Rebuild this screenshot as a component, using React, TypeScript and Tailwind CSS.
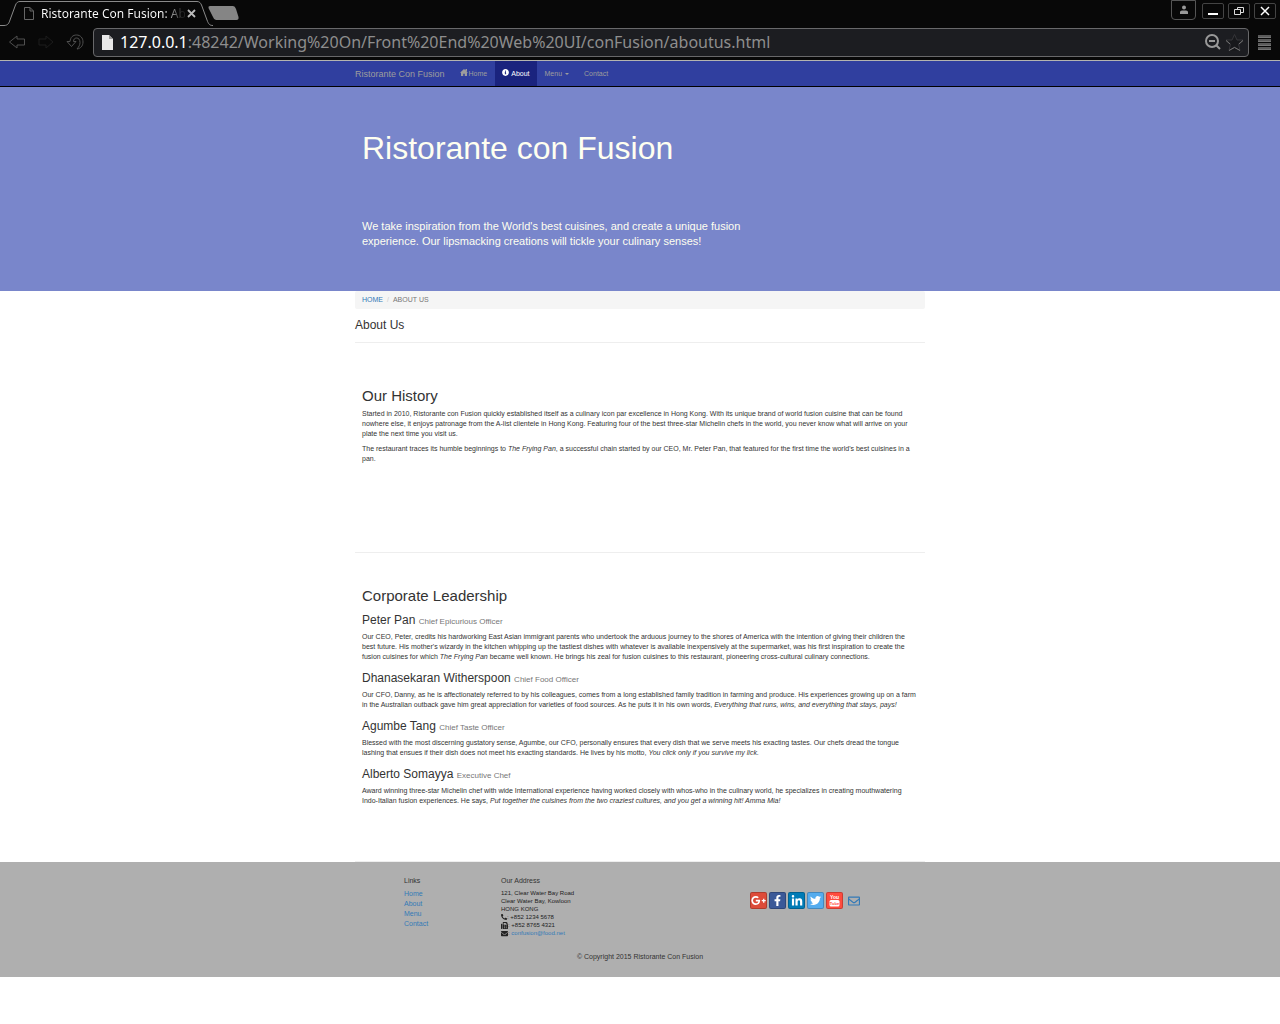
import React from 'react';
import {
  FaEnvelope,
  FaFacebookF,
  FaFax,
  FaGooglePlusG,
  FaInfoCircle,
  FaLinkedinIn,
  FaPhoneAlt,
  FaRegEnvelope,
  FaTwitter,
} from 'react-icons/fa';

const link = 'text-[#337ab7] hover:underline';

function BrowserChrome() {
  return (
    <header className="border-b border-[#b4b4b0] bg-[#080808] font-['Noto_Sans',sans-serif]">
      <div className="flex h-[26px] items-start">
        <div className="relative flex h-[26px] w-[213px] items-center pl-[23px]">
          <svg className="absolute inset-0" width="213" height="26" fill="none" stroke="#8a8a8a">
            <path d="M0 25.5H4C8 25.500 9 23 10 20L15.500 5C16.500 2.500 18 1.500 20 1.500H197C199.500 1.500 200.500 3 201.500 5L207 20C208.500 24 209.500 25.500 213 25.500" />
          </svg>
          <svg width="12" height="15" viewBox="0 0 12 15" fill="none" stroke="#666">
            <path d="M1.500 1.500H7L10.500 5V13.500H1.500ZM7 1.500V5H10.500" />
          </svg>
          <span className="relative ml-[6px] w-[144px] bg-[linear-gradient(90deg,#fff_85%,#222_98%)] bg-clip-text text-[12px] leading-[17px] whitespace-nowrap text-transparent">
            Ristorante Con Fusion: Ab
          </span>
          <button aria-label="Close tab" className="relative ml-[2px]">
            <svg width="9" height="9" stroke="#bbb" strokeWidth="1.800">
              <path d="M1 1L8 8M8 1L1 8" />
            </svg>
          </button>
        </div>
        <button aria-label="New tab" className="-ml-[5px] pt-[6px]">
          <svg width="31" height="14">
            <path d="M2 0H25Q27 0 28 3L30.500 11Q31 14 28.500 14H8Q6 14 5 11L0.500 2Q0 0 2 0Z" fill="#858585" />
          </svg>
        </button>
        <div className="ml-auto flex items-start gap-[4px] pr-[4px]">
          <button aria-label="Profile" className="mr-[2px] flex h-[20px] w-[25px] items-center justify-center rounded-b-[4px] border border-[#555]">
            <svg width="10" height="10" fill="#999">
              <circle cx="5" cy="2.500" r="2" />
              <path d="M1 9V7Q1 5.500 3 5.500H7Q9 5.500 9 7V9Z" />
            </svg>
          </button>
          <button aria-label="Minimize" className="mt-[3px] flex h-4 w-[22px] items-center justify-center rounded-[2px] border border-[#444]">
            <svg width="12" height="12"><path d="M1 8H11V10H1Z" fill="#fff" /></svg>
          </button>
          <button aria-label="Restore" className="mt-[3px] flex h-4 w-[22px] items-center justify-center rounded-[2px] border border-[#444]">
            <svg width="12" height="10" fill="none" stroke="#ddd">
              <path d="M4.500 3V1.500H10.500V6.500H8M1.500 3.500H7.500V8.500H1.500Z" />
            </svg>
          </button>
          <button aria-label="Close" className="mt-[3px] flex h-4 w-[22px] items-center justify-center rounded-[2px] border border-[#444]">
            <svg width="10" height="10" stroke="#fff" strokeWidth="1.500"><path d="M1 1L9 9M9 1L1 9" /></svg>
          </button>
        </div>
      </div>
      <div className="flex h-[34px] items-center pb-[2px] pl-[8px]">
        <button aria-label="Back">
          <svg width="18" height="16" fill="none" stroke="#505050">
            <path d="M1.500 8L9 2V5H16.500V11H9V14Z" />
          </svg>
        </button>
        <button aria-label="Forward" className="ml-[12px]">
          <svg width="16" height="16" fill="none" stroke="#1c1c1c">
            <path d="M15 8L8 2V5H1V11H8V14Z" />
          </svg>
        </button>
        <button aria-label="Reload" className="ml-[12px]">
          <svg width="20" height="18" fill="none" stroke="#505050">
            <path d="M1 8.500H4C4.500 4 7 2 10.500 2C14.500 2 17 5 17 9C17 13 14.500 15.500 11 16C13 13.500 14 12 14 9.500C14 6.500 12.500 5 10.500 5C8.500 5 7.500 6.500 7.500 8.500H10L5.500 13.500Z" />
          </svg>
        </button>
        <div className="ml-[7px] flex h-[29px] flex-1 items-center rounded-[4px] border border-[#68686a] bg-[#1c1d21] pr-[4px] pl-[8px]">
          <svg width="12" height="15">
            <path d="M0 0H7L11 4V15H0Z" fill="#e8e8e8" />
            <path d="M7 0V4H11Z" fill="#999" />
          </svg>
          <div className="ml-[6px] flex-1 text-[16px] leading-6 text-[#8e8e8e]">
            <span className="text-white">127.0.0.1</span>:48242/Working%20On/Front%20End%20Web%20UI/conFusion/aboutus.html
          </div>
          <button aria-label="Zoom">
            <svg width="18" height="18" fill="none" stroke="#999" strokeWidth="2">
              <circle cx="8" cy="8" r="6" />
              <path d="M5 8H11M12 12L16 16" />
            </svg>
          </button>
          <button aria-label="Bookmark" className="ml-[3px]">
            <svg width="19" height="19" fill="#17181b" stroke="#36363a">
              <path d="M9.500 1.500L12 7H18L13.500 11L15 17.500L9.500 14L4 17.500L5.500 11L1 7H7Z" />
              <path d="M1 7.500L5 11M18 7.500L14 11M4 17.500L9.500 14.500L15 17.500" stroke="#777" />
            </svg>
          </button>
        </div>
        <button aria-label="Menu" className="mr-[8px] ml-[8px]">
          <svg width="15" height="15">
            <path d="M1 0H14V3H1ZM1 4H14V7H1ZM1 8H14V11H1ZM1 12H14V15H1Z" fill="#5a5a5a" />
            <path d="M1 2.500H14M1 6.500H14M1 10.500H14M1 14.500H14" stroke="#757575" />
          </svg>
        </button>
      </div>
    </header>
  );
}

function Nav() {
  return (
    <nav className="border-b border-black bg-[#303f9f] text-[7px] leading-[10px] text-[#9d9d9d]">
      <div className="mx-auto flex h-[25px] max-w-[570px] items-stretch">
        <a href="#" className="mr-[7px] flex items-center text-[9px]">Ristorante Con Fusion</a>
        <a href="#" className="flex items-center gap-[1px] px-[8px]">
          <svg width="8" height="7" viewBox="0 0 16 14" fill="currentColor" className="mb-[2px]">
            <path d="M8 0L16 7.500H14V14H9.500V9.500H6.500V14H2V7.500H0L8 0ZM11 0H14V5L11 3Z" />
          </svg>
          Home
        </a>
        <a href="#" className="flex items-center gap-[2px] bg-[#1a237e] px-[7px] text-white">
          <FaInfoCircle size={7} className="mb-[2px]" /> About
        </a>
        <button className="flex items-center gap-[3px] px-[8px]">
          Menu
          <svg width="4" height="2" fill="currentColor"><path d="M0 0H4L2 2Z" /></svg>
        </button>
        <a href="#" className="flex items-center px-[7px]">Contact</a>
      </div>
    </nav>
  );
}

const leaders = [
  {
    name: 'Peter Pan',
    role: 'Chief Epicurious Officer',
    bio: (
      <>
        Our CEO, Peter, credits his hardworking East Asian immigrant parents who undertook the arduous journey to the
        shores of America with the intention of giving their children the best future. His mother's wizardy in the
        kitchen whipping up the tastiest dishes with whatever is available inexpensively at the supermarket, was his
        first inspiration to create the fusion cuisines for which <em>The Frying Pan</em> became well known. He brings
        his zeal for fusion cuisines to this restaurant, pioneering cross-cultural culinary connections.
      </>
    ),
  },
  {
    name: 'Dhanasekaran Witherspoon',
    role: 'Chief Food Officer',
    bio: (
      <>
        Our CFO, Danny, as he is affectionately referred to by his colleagues, comes from a long established family
        tradition in farming and produce. His experiences growing up on a farm in the Australian outback gave him great
        appreciation for varieties of food sources. As he puts it in his own words,{' '}
        <em>Everything that runs, wins, and everything that stays, pays!</em>
      </>
    ),
  },
  {
    name: 'Agumbe Tang',
    role: 'Chief Taste Officer',
    bio: (
      <>
        Blessed with the most discerning gustatory sense, Agumbe, our CFO, personally ensures that every dish that we
        serve meets his exacting tastes. Our chefs dread the tongue lashing that ensues if their dish does not meet his
        exacting standards. He lives by his motto, <em>You click only if you survive my lick.</em>
      </>
    ),
  },
  {
    name: 'Alberto Somayya',
    role: 'Executive Chef',
    bio: (
      <>
        Award winning three-star Michelin chef with wide International experience having worked closely with whos-who in
        the culinary world, he specializes in creating mouthwatering Indo-Italian fusion experiences. He says,{' '}
        <em>Put together the cuisines from the two craziest cultures, and you get a winning hit! Amma Mia!</em>
      </>
    ),
  },
];

function Footer() {
  const tile = 'flex size-[17px] items-center justify-center rounded-[2px] border border-black/20 text-white';
  return (
    <footer className="bg-[#afafaf] pt-[14px] pb-[15px]">
      <div className="mx-auto flex max-w-[570px] pl-[49px]">
        <div className="w-[97px]">
          <h5 className="mb-[3px]">Links</h5>
          <ul>
            {['Home', 'About', 'Menu', 'Contact'].map((item) => (
              <li key={item}><a href="#" className={link}>{item}</a></li>
            ))}
          </ul>
        </div>
        <div className="w-[244px]">
          <h5 className="mb-[3px]">Our Address</h5>
          <address className="text-[6px] leading-[8px] text-[#222] not-italic">
            121, Clear Water Bay Road<br />
            Clear Water Bay, Kowloon<br />
            HONG KONG
            <div className="flex items-center"><FaPhoneAlt size={6} />: +852 1234 5678</div>
            <div className="flex items-center"><FaFax size={7} />: +852 8765 4321</div>
            <div className="flex items-center"><FaEnvelope size={7} />:&nbsp;<a href="mailto:confusion@food.net" className={link}>confusion@food.net</a></div>
          </address>
        </div>
        <div className="flex gap-[2px] pt-[16px] pl-[5px]">
          <a href="#" aria-label="Google Plus" className={`${tile} bg-[#dd4b39]`}><FaGooglePlusG size={15} /></a>
          <a href="#" aria-label="Facebook" className={`${tile} bg-[#3b5998]`}><FaFacebookF size={11} /></a>
          <a href="#" aria-label="LinkedIn" className={`${tile} bg-[#007bb6]`}><FaLinkedinIn size={12} /></a>
          <a href="#" aria-label="Twitter" className={`${tile} bg-[#55acee]`}><FaTwitter size={11} /></a>
          <a href="#" aria-label="YouTube" className={`${tile} bg-[#ff4b3e]`}>
            <svg width="11" height="13" viewBox="0 0 22 26" fontWeight="bold" textAnchor="middle">
              <text x="11" y="10" fontSize="10" fill="#fff">You</text>
              <rect x="1" y="12" width="20" height="13" rx="3" fill="#fff" />
              <text x="11" y="22" fontSize="8" fill="#ff4b3e">Tube</text>
            </svg>
          </a>
          <a href="#" aria-label="Email" className="flex size-[17px] items-center justify-center text-[#337ab7]"><FaRegEnvelope size={12} /></a>
        </div>
      </div>
      <p className="mt-[15px] text-center">© Copyright 2015 Ristorante Con Fusion</p>
    </footer>
  );
}

export default function App() {
  return (
    <div className="min-h-screen bg-white font-['Liberation_Sans',Arial,sans-serif] text-[7px] leading-[10px] text-[#333]">
      <BrowserChrome />
      <Nav />
      <section className="bg-[#7986cb] text-[#fffff0]">
        <div className="mx-auto max-w-[570px] px-[7px] pt-[44px] pb-[42px]">
          <h1 className="text-[32px] leading-[35px]">Ristorante con Fusion</h1>
          <p className="mt-[53px] max-w-[390px] text-[11px] leading-[15px]">
            We take inspiration from the World's best cuisines, and create a unique fusion experience. Our lipsmacking
            creations will tickle your culinary senses!
          </p>
        </div>
      </section>
      <main className="mx-auto max-w-[570px]">
        <ol className="flex h-[18px] items-center rounded-[2px] bg-[#f5f5f5] px-[7px]">
          <li><a href="#" className={link}>HOME</a></li>
          <li className="px-[4px] text-[#ccc]">/</li>
          <li className="text-[#777]">ABOUT US</li>
        </ol>
        <h3 className="mt-[9px] text-[12px] leading-[14px]">About Us</h3>
        <hr className="mt-[10px] border-[#eee]" />
        <section className="px-[7px] pt-[44px] pb-[88px]">
          <h2 className="text-[15px] leading-[17px]">Our History</h2>
          <p className="mt-[5px]">
            Started in 2010, Ristorante con Fusion quickly established itself as a culinary icon par excellence in Hong
            Kong. With its unique brand of world fusion cuisine that can be found nowhere else, it enjoys patronage from
            the A-list clientele in Hong Kong. Featuring four of the best three-star Michelin chefs in the world, you
            never know what will arrive on your plate the next time you visit us.
          </p>
          <p className="mt-[5px]">
            The restaurant traces its humble beginnings to <em>The Frying Pan</em>, a successful chain started by our
            CEO, Mr. Peter Pan, that featured for the first time the world's best cuisines in a pan.
          </p>
        </section>
        <hr className="border-[#eee]" />
        <section className="px-[7px] pt-[34px] pb-[55px]">
          <h2 className="text-[15px] leading-[17px]">Corporate Leadership</h2>
          {leaders.map((leader) => (
            <article key={leader.name} className="mt-[9px]">
              <h3 className="text-[12px] leading-[14px]">
                {leader.name} <small className="text-[8px] leading-[8px] text-[#777]">{leader.role}</small>
              </h3>
              <p className="mt-[5px]">{leader.bio}</p>
            </article>
          ))}
        </section>
        <hr className="border-[#eee]" />
      </main>
      <Footer />
    </div>
  );
}
